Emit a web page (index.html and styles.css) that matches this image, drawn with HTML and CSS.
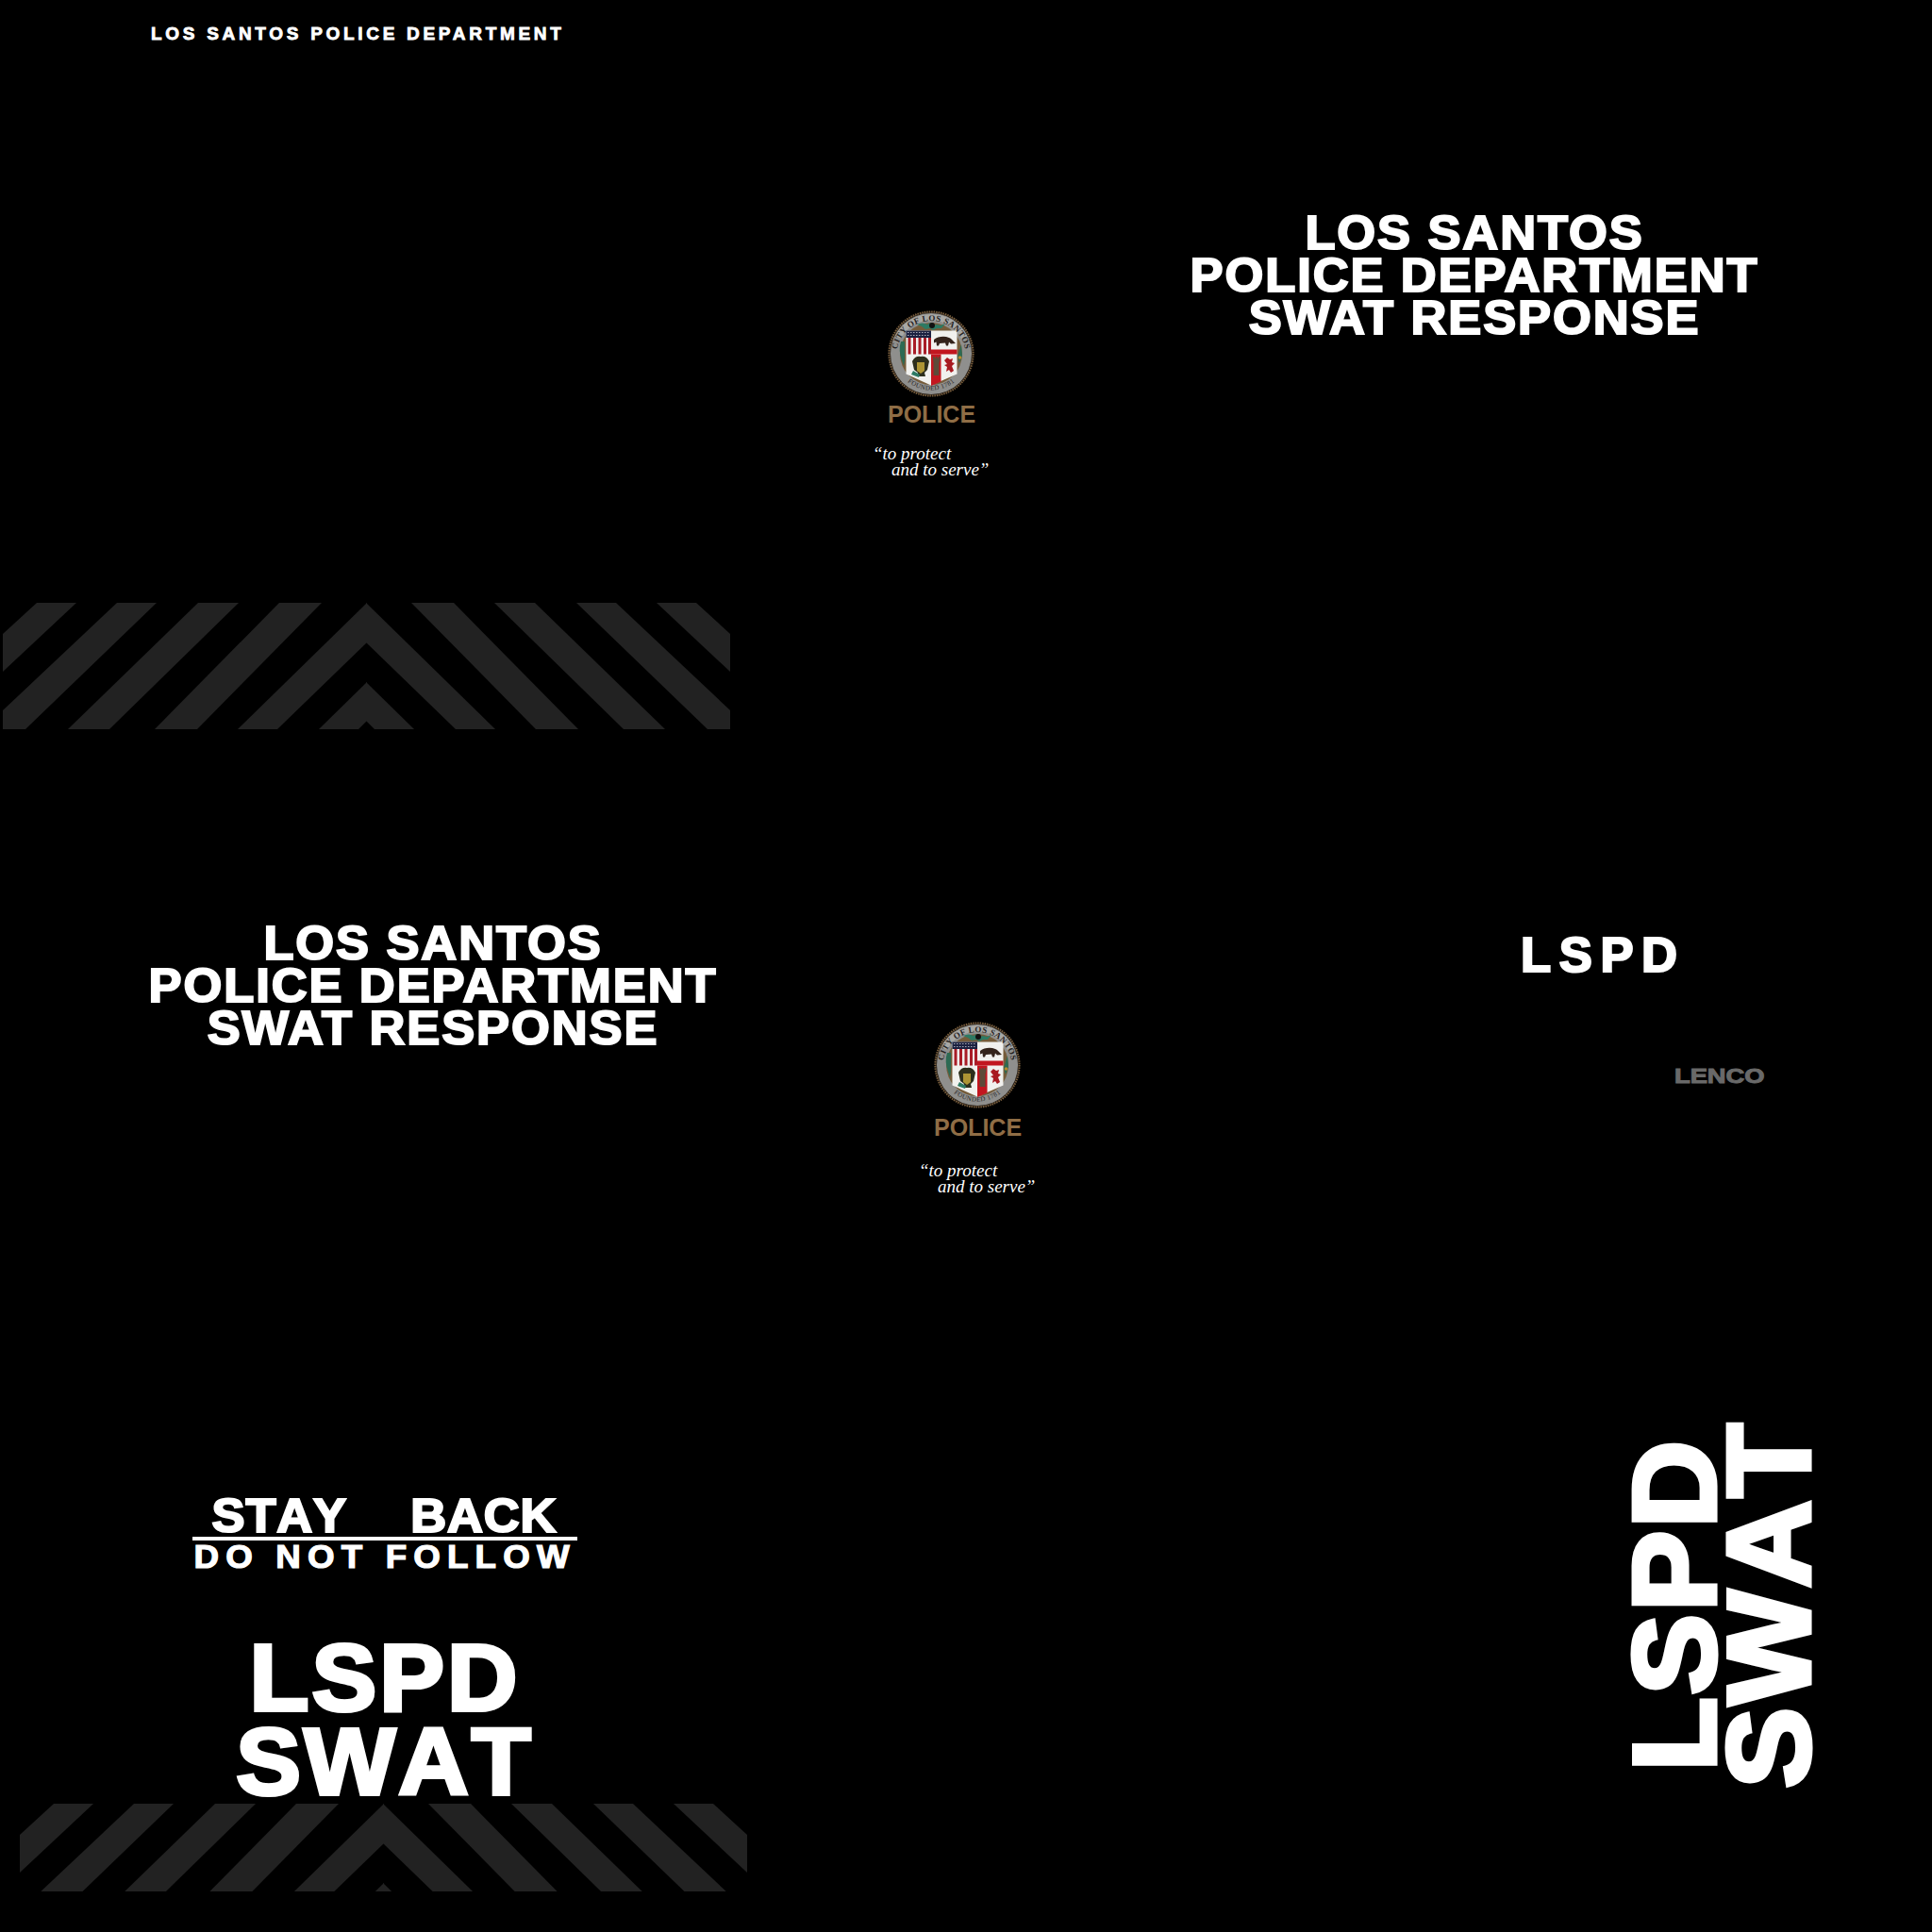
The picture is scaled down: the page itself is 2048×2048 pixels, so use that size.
FILE: index.html
```html
<!DOCTYPE html>
<html lang="en">
<head>
    <meta charset="UTF-8">
    <title>LSPD SWAT livery</title>
    <link rel="stylesheet" href="styles.css">
</head>
<body>
    <svg class="defs" width="0" height="0">
        <defs>
            <g id="stripes-half">
                <polygon points="385,0 522,134 480,134 385,42"/>
                <polygon points="385,84 436,134 394,134 385,125"/>
                <polygon points="433,0 478,0 610,134 565,134"/>
                <polygon points="521,0 564,0 702,134 658,134"/>
                <polygon points="608,0 650,0 771,114 771,134 747,134"/>
                <polygon points="693,0 735,0 771,33 771,73"/>
            </g>
            <symbol id="stripes" viewBox="0 0 771 134">
                <use href="#stripes-half"/>
                <use href="#stripes-half" transform="translate(771,0) scale(-1,1)"/>
            </symbol>
            <g id="seal">
                <circle cx="46" cy="46" r="44.6" fill="#2a2118" stroke="#7a5f3e" stroke-width="2" stroke-dasharray="1.5 1"/>
                <circle cx="46" cy="46" r="43" fill="#8f8f8d"/>
                <path d="M8 27a43 43 0 0 1 76 0l-6 3a36 36 0 0 0-64 0z" fill="#a8a8a5"/>
                <circle cx="46" cy="46" r="33" fill="#755c3a"/>
                <!-- shield -->
                <path d="M19.5 21.5h54v46l-27.500 12-26.500-12z" fill="#f1f1ee"/>
                <rect x="19.500" y="21.500" width="26.500" height="7.500" fill="#1b2140"/>
                <path d="M21 23.500h24M21 26.500h24" stroke="#c9c9d0" stroke-width="0.8" stroke-dasharray="1.500 1.500"/>
                <path d="M21.500 29h3v17.500h-3zM27 29h3v17.500h-3zM32.500 29h3v17.500h-3zM38 29h3v17.500h-3zM43 29h3v17.500h-3z" fill="#a91d27"/>
                <path d="M49 31q5-4 13-3 5 1 7 4l3 3-5 .5-2-2-1 4h-2l-1-3-6 .5-1 2.500h-2l-.5-4-2.500 1z" fill="#33231b"/>
                <rect x="46" y="41.500" width="27.500" height="5" fill="#c2161f"/>
                <path d="M46 46.500h10.500v29l-10.500 4.500z" fill="#c2161f"/>
                <path d="M48 52v-3h1.500v1.500h1.500v-1.500h1.500v1.500h1.500v-1.500h1.500v3l-1 4v13h-6v-13z" fill="#5d4a38"/>
                <path d="M60 53l3-3 3 2 3-1-1 4 3 1-3 3 2 5-3 2-2-3-3 2 1-5-3-2 3-1z" fill="#a81a20"/>
                <path d="M26 54q3-6 9-5 6-1 9 5l-2 9-3 3 1 4h-9l1-4-4-3z" fill="#2d2f1c"/>
                <path d="M31 55h8v9l-4 3-4-3z" fill="#ad9534"/>
                <path d="M27 64l-2 4 8 3 1-3z" fill="#2d7a63"/>
                <!-- olive branches -->
                <path d="M31 15q6-3 11 0l3-2 3 3 4-1 4 1 5-2-4 5-5 0-4 2-3-2-5 1-4-3z" fill="#2d7a63"/>
                <circle cx="47" cy="16" r="3" fill="#111"/>
                <path d="M14 33q-3 9 1 20l2 6 1-6 0-20z" fill="#2d6a53"/>
                <path d="M78 36l1 12-3 8-2-7z" fill="#2d6a53"/>
                <circle cx="76.500" cy="50" r="1.800" fill="#b88c2c"/>
                <path id="seal-arc" d="M10.500 56a36.500 36.500 0 1 1 71 0" fill="none"/>
                <path id="seal-foot-arc" d="M14 68a39 39 0 0 0 64 0" fill="none"/>
                <text class="seal-text"><textPath href="#seal-arc" startOffset="50%" text-anchor="middle">CITY OF LOS SANTOS</textPath></text>
                <text class="seal-foot"><textPath href="#seal-foot-arc" startOffset="50%" text-anchor="middle">FOUNDED 1781</textPath></text>
            </g>
        </defs>
    </svg>

    <div class="sheet">
        <p class="decal top-line">LOS SANTOS POLICE DEPARTMENT</p>

        <div class="decal response response-upper">
            <span>LOS SANTOS</span><span>POLICE DEPARTMENT</span><span>SWAT RESPONSE</span>
        </div>
        <div class="decal response response-lower">
            <span>LOS SANTOS</span><span>POLICE DEPARTMENT</span><span>SWAT RESPONSE</span>
        </div>

        <div class="decal badge badge-upper">
            <svg class="seal" viewBox="0 0 92 92"><use href="#seal"/></svg>
            <p class="badge-name">POLICE</p>
            <p class="motto">“to protect<br><span>and to serve”</span></p>
        </div>
        <div class="decal badge badge-lower">
            <svg class="seal" viewBox="0 0 92 92"><use href="#seal"/></svg>
            <p class="badge-name">POLICE</p>
            <p class="motto">“to protect<br><span>and to serve”</span></p>
        </div>

        <svg class="decal band band-upper" viewBox="0 0 771 134"><use href="#stripes"/></svg>
        <div class="decal band band-lower"><svg viewBox="0 0 771 134"><use href="#stripes"/></svg></div>

        <p class="decal lspd-small">LSPD</p>
        <p class="decal lenco">LENCO</p>

        <div class="decal stay-back">
            <p class="stay-line"><span>STAY</span><span>BACK</span></p>
            <p class="follow-line">DO NOT FOLLOW</p>
        </div>

        <div class="decal unit unit-flat"><span>LSPD</span><span>SWAT</span></div>
        <div class="decal unit unit-side"><span>LSPD</span><span>SWAT</span></div>
    </div>
</body>
</html>
```

FILE: styles.css
```css
* {
    box-sizing: border-box;
}
body {
    margin: 0;
    background-color: #000;
    color: #fff;
    font-family: "Liberation Sans", Arial, sans-serif;
    font-weight: 700;
}
p {
    margin: 0;
}
.defs {
    position: absolute;
}
.sheet {
    position: relative;
    width: 2048px;
    height: 2048px;
    overflow: hidden;
    background-color: #000;
}
/* texture sheet, every decal has its own place on the canvas */
.decal {
    position: absolute;
    white-space: nowrap;
}
.top-line {
    left: 160px;
    top: 25px;
    font-size: 19px;
    line-height: 21px;
    letter-spacing: 3.7px;
    -webkit-text-stroke: 0.8px #fff;
}
.response {
    display: flex;
    flex-direction: column;
    align-items: center;
    width: 610px;
    font-size: 50px;
    line-height: 45px;
    letter-spacing: 1.8px;
    -webkit-text-stroke: 2px #fff;
    transform: scaleX(1.05);
}
.response-upper {
    left: 1258px;
    top: 225px;
}
.response-lower {
    left: 154px;
    top: 978px;
}
.badge {
    display: flex;
    flex-direction: column;
    width: 130px;
}
.badge-upper {
    left: 922px;
    top: 329px;
}
.badge-lower {
    left: 971px;
    top: 1083px;
}
.seal {
    width: 92px;
    height: 92px;
    margin-left: 19px;
}
.seal-text {
    font-family: "Liberation Serif", serif;
    font-size: 9px;
    font-weight: 700;
    letter-spacing: 0.4px;
    fill: #26231f;
}
.seal-foot {
    font-family: "Liberation Serif", serif;
    font-size: 7px;
    font-weight: 400;
    letter-spacing: 0.4px;
    fill: #26231f;
}
.badge-name {
    margin-left: 19px;
    color: #8f6d45;
    font-size: 25px;
    line-height: 30px;
}
.badge-upper .badge-name {
    margin-top: 3px;
}
.badge-lower .badge-name {
    margin-top: 5px;
}
.motto {
    margin-left: 3px;
    font-family: "Liberation Serif", serif;
    font-style: italic;
    font-weight: 400;
    font-size: 19px;
    line-height: 17px;
}
.badge-upper .motto {
    margin-top: 18px;
}
.badge-lower .motto {
    margin-top: 22px;
}
.motto span {
    margin-left: 20px;
}
.band {
    fill: #222;
}
.band-upper {
    left: 3px;
    top: 639px;
    width: 771px;
    height: 134px;
}
.band-lower {
    left: 21px;
    top: 1912px;
    width: 771px;
    height: 93px;
    overflow: hidden;
}
.band-lower svg {
    display: block;
    width: 771px;
    height: 134px;
}
.lspd-small {
    left: 1612px;
    top: 984px;
    font-size: 51px;
    line-height: 58px;
    letter-spacing: 8.4px;
    -webkit-text-stroke: 2.2px #fff;
    transform: scaleX(1.03);
    transform-origin: left center;
}
.lenco {
    left: 1775px;
    top: 1130px;
    color: #696969;
    font-size: 22px;
    line-height: 22px;
    -webkit-text-stroke: 1px #696969;
    transform: scaleX(1.24);
    transform-origin: left center;
}
.stay-back {
    left: 204px;
    top: 1583px;
    width: 408px;
}
.stay-line {
    display: flex;
    justify-content: space-between;
    height: 50px;
    padding: 3px 25px 0 24px;
    border-bottom: 4px solid #fff;
    font-size: 50px;
    line-height: 43px;
    letter-spacing: 0.8px;
    font-kerning: none;
    -webkit-text-stroke: 2.2px #fff;
}
.stay-line span {
    transform: scaleX(1.05);
}
.follow-line {
    text-align: center;
    font-size: 35px;
    line-height: 34px;
    letter-spacing: 6.8px;
    -webkit-text-stroke: 1.2px #fff;
    transform: scaleX(1.05);
    transform-origin: 49% center;
}
.unit {
    display: flex;
    flex-direction: column;
    align-items: center;
    width: 360px;
    font-size: 100px;
    line-height: 89px;
    letter-spacing: 3px;
    font-kerning: none;
    -webkit-text-stroke: 4px #fff;
}
.unit-flat {
    left: 228px;
    top: 1734px;
    transform: scaleX(1.03);
}
.unit-side {
    left: 1644px;
    top: 1621px;
    line-height: 80px;
    letter-spacing: 2px;
    transform: rotate(-90deg) scale(1.2875, 1.25);
}
```
